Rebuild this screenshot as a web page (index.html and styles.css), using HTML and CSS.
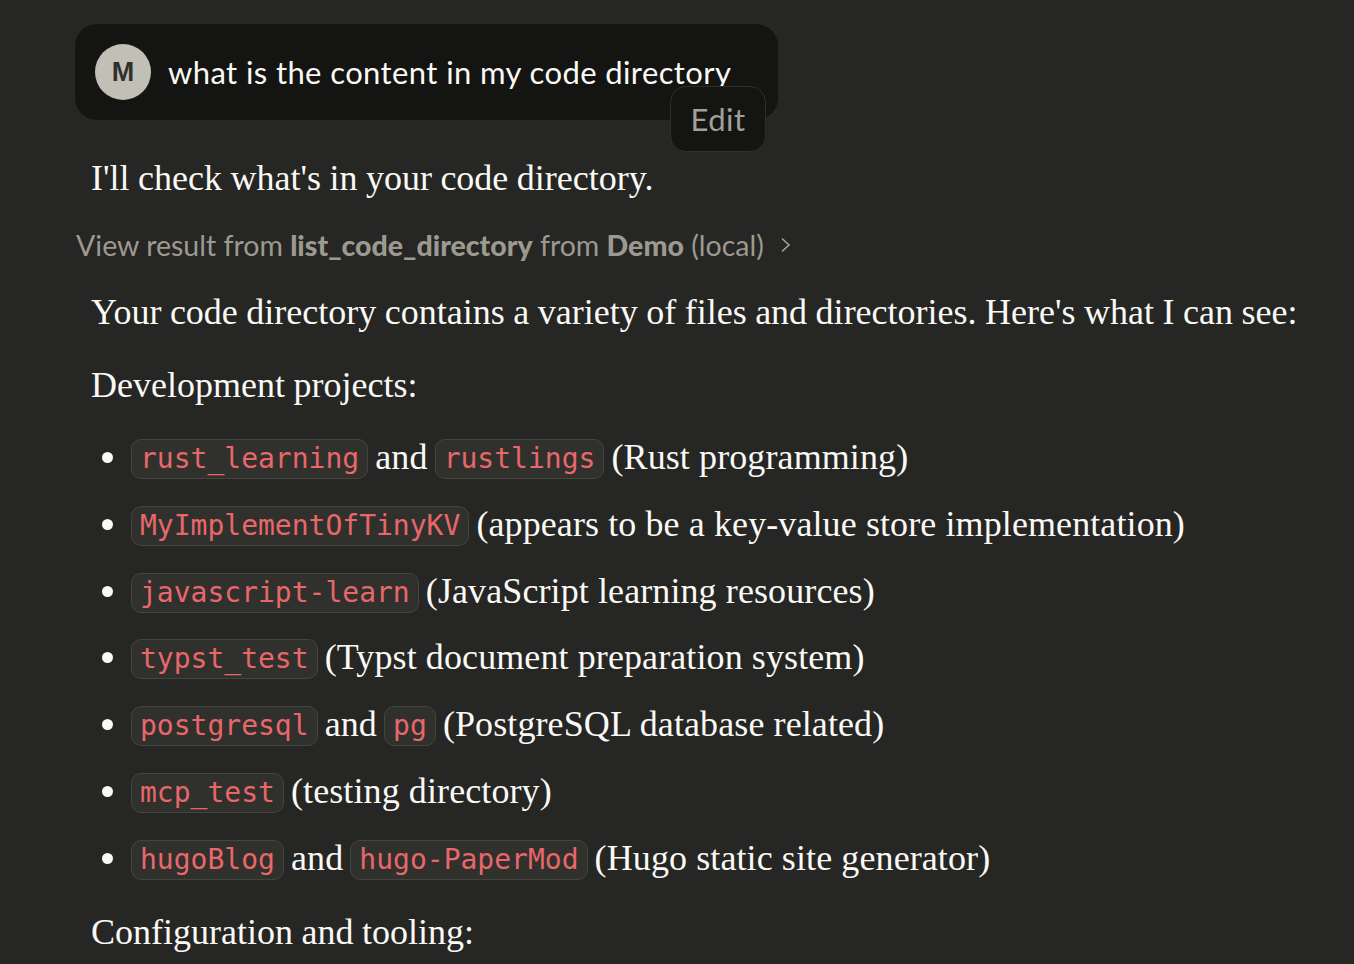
FILE: index.html
```html
<!DOCTYPE html>
<html>
<head>
  <title>Chat</title>
  <link rel="stylesheet" href="styles.css">
</head>
<body>
  <div class="chat">
    <div class="user-msg">
      <div class="avatar">M</div>
      <div class="user-text">what is the content in my code directory</div>
      <button class="edit-btn">Edit</button>
    </div>

    <p class="reply first">I'll check what's in your code directory.</p>

    <div class="tool-row">
      <span>View result from <b>list_code_directory</b> from <b>Demo</b> (local)</span>
      <svg class="chevron" width="14" height="18" viewBox="0 0 14 18"><path d="M3 2.5 L10 9 L3 15.5" fill="none" stroke="#a3a197" stroke-width="1.6"/></svg>
    </div>

    <p class="reply">Your code directory contains a variety of files and directories. Here's what I can see:</p>
    <p class="reply heading">Development projects:</p>

    <ul class="items">
      <li><code>rust_learning</code> and <code>rustlings</code> (Rust programming)</li>
      <li><code>MyImplementOfTinyKV</code> (appears to be a key-value store implementation)</li>
      <li><code>javascript-learn</code> (JavaScript learning resources)</li>
      <li><code>typst_test</code> (Typst document preparation system)</li>
      <li><code>postgresql</code> and <code>pg</code> (PostgreSQL database related)</li>
      <li><code>mcp_test</code> (testing directory)</li>
      <li><code>hugoBlog</code> and <code>hugo-PaperMod</code> (Hugo static site generator)</li>
    </ul>

    <p class="reply config">Configuration and tooling:</p>
  </div>
</body>
</html>
```

FILE: styles.css
```css
html, body {
  margin: 0;
  height: 964px;
  overflow: hidden;
  background-color: #262624;
}

.chat {
  padding: 24px 0 0 75px;
  color: #faf9f5;
}

.user-msg {
  position: relative;
  display: flex;
  align-items: center;
  gap: 17px;
  width: 663px;
  height: 96px;
  padding-left: 20px;
  padding-right: 20px;
  background-color: #141413;
  border-radius: 22px;
}

.avatar {
  width: 56px;
  height: 55px;
  padding-top: 1px;
  border-radius: 50%;
  background-color: #c2c0b6;
  color: #30302e;
  font: bold 27px "Liberation Sans", sans-serif;
  display: flex;
  align-items: center;
  justify-content: center;
}

.user-text {
  font: 31px/40px Lato, sans-serif;
  letter-spacing: 0.4px;
}

.edit-btn {
  position: absolute;
  left: 595px;
  top: 62px;
  width: 96px;
  height: 66px;
  padding: 0;
  background-color: #141413;
  border: 1px solid #2e2e2c;
  border-radius: 16px;
  color: #a3a197;
  font: 31px Lato, sans-serif;
  letter-spacing: 0.5px;
}

.reply {
  margin: 0;
  padding-left: 16px;
  font: 36px/44px "Liberation Serif", serif;
  word-spacing: -0.5px;
  white-space: nowrap;
}

.reply.first {
  margin-top: 36px;
}

.reply.heading {
  margin-top: 29px;
}

.reply.config {
  margin-top: 5px;
}

.tool-row {
  display: flex;
  align-items: center;
  gap: 15px;
  height: 44px;
  margin: 23px 0 23px 1px;
  color: #9c9a90;
  font: 28.5px Lato, sans-serif;
}

.tool-row b {
  font-weight: 900;
}

.items {
  margin: 30px 0 0;
  padding: 0 0 0 58px;
  list-style: none;
}

.items li {
  position: relative;
  height: 66.8px;
  font: 36px/40px "Liberation Serif", serif;
  letter-spacing: 0.1px;
  white-space: nowrap;
}

.items li::before {
  content: "";
  position: absolute;
  left: -31px;
  top: 15px;
  width: 11px;
  height: 11px;
  border-radius: 50%;
  background-color: #faf9f5;
}

code {
  display: inline-block;
  height: 38px;
  line-height: 38px;
  padding: 0 8px;
  margin: 0 -2px;
  vertical-align: 1px;
  background-color: #30302c;
  border: 1px solid #45453f;
  border-radius: 10px;
  color: #e8676b;
  font-family: "DejaVu Sans Mono", monospace;
  font-size: 28px;
  letter-spacing: 0;
}
```
